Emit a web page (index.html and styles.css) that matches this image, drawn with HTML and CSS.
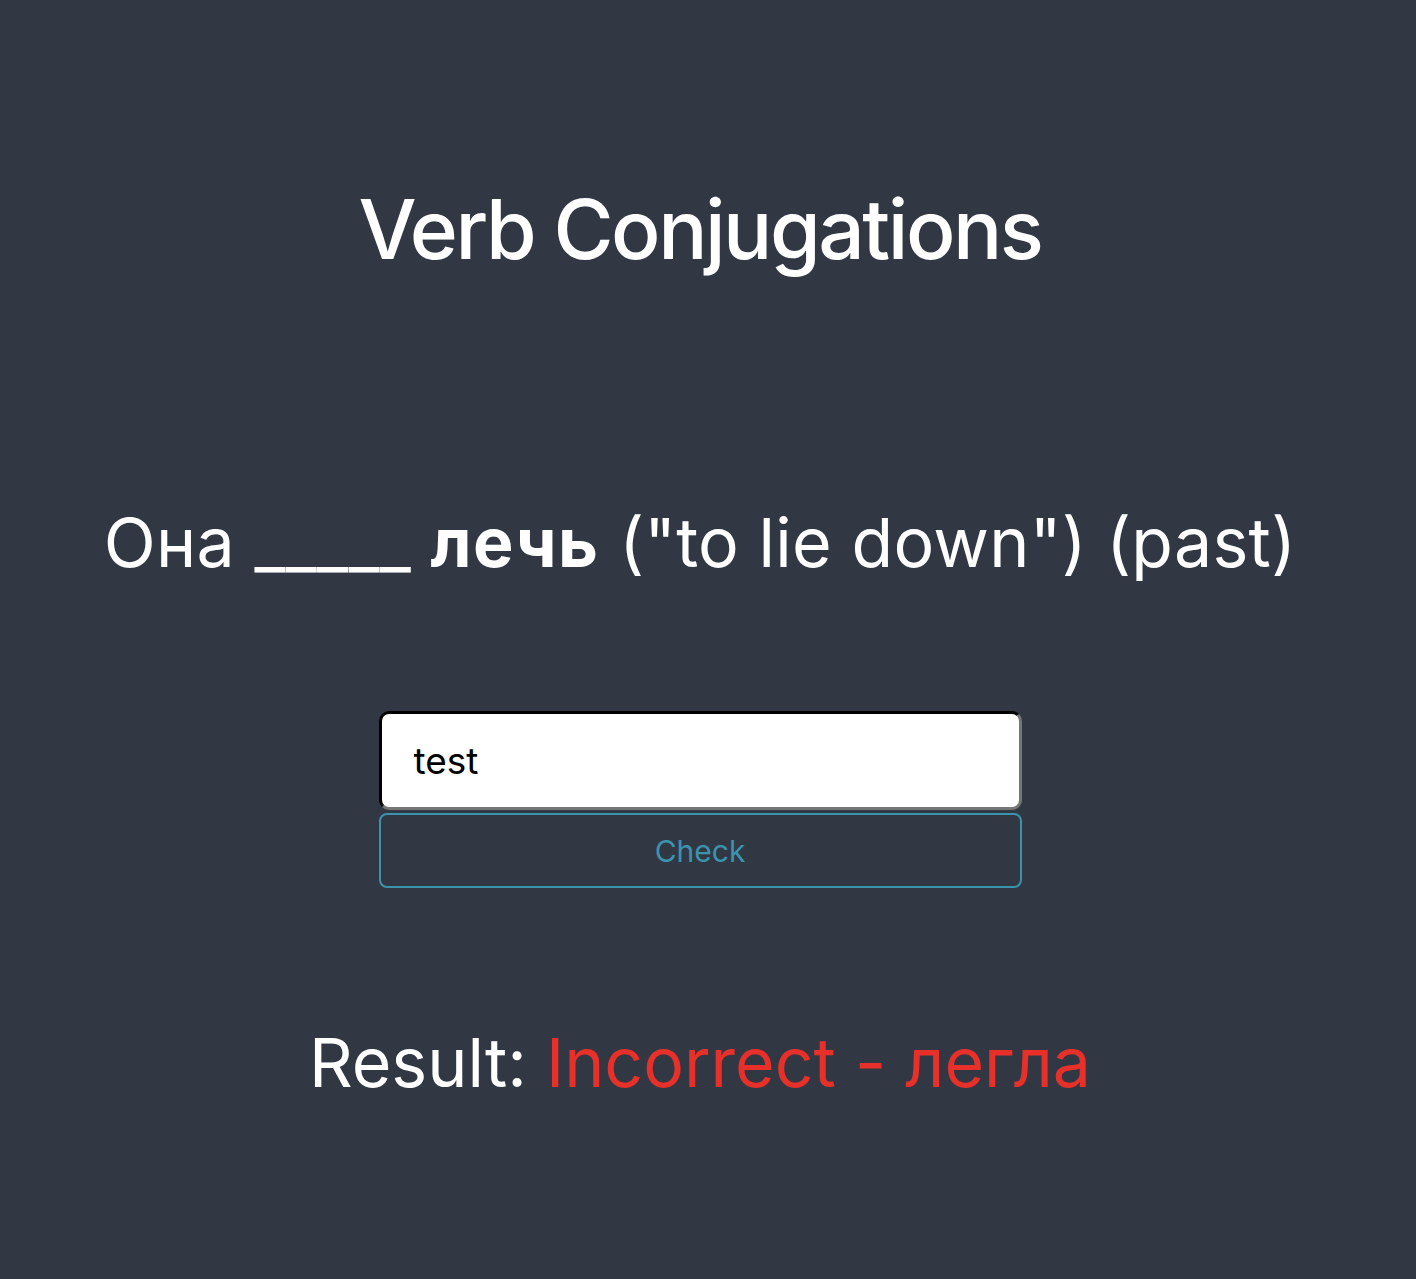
FILE: index.html
```html
<!DOCTYPE html>
<html lang="en">
<head>
<meta charset="utf-8">
<title>Verb Conjugations</title>
<link rel="stylesheet" href="styles.css">
</head>
<body>
<main class="app">
  <h1 class="title">Verb Conjugations</h1>
  <p class="prompt">Она _____ <strong>лечь</strong> ("to lie down") (past)</p>
  <form class="answer">
    <input class="answer-input" type="text" value="test">
    <button class="check-btn" type="button">Check</button>
  </form>
  <p class="result">Result: <span class="result-bad">Incorrect - легла</span></p>
</main>
</body>
</html>
```

FILE: styles.css
```css
html, body {
  margin: 0;
  padding: 0;
  background: #313843;
  min-height: 100%;
}
body {
  font-family: Inter, "Noto Sans", "Liberation Sans", sans-serif;
  color: #ffffff;
  min-height: 1279px;
}
.app {
  display: flex;
  flex-direction: column;
  align-items: center;
  padding-top: 180px;
  padding-right: 16px;
}
.title {
  margin: 0;
  font-size: 82px;
  font-weight: 500;
  line-height: 100px;
  letter-spacing: -2.5px;
}
.prompt {
  margin: 0;
  margin-top: 222px;
  font-size: 68px;
  font-weight: 400;
  line-height: 80px;
  letter-spacing: 0.3px;
}
.prompt strong {
  font-weight: 700;
  letter-spacing: 1.5px;
}
.answer {
  display: flex;
  flex-direction: column;
  width: 643px;
  margin-top: 129px;
  gap: 3px;
}
.answer-input {
  box-sizing: border-box;
  height: 99px;
  width: 100%;
  border: 3px inset #767676;
  border-top-color: #1f1f1f;
  border-left-color: #1f1f1f;
  border-radius: 10px;
  background: #ffffff;
  padding: 0 32px;
  font-family: inherit;
  font-size: 37px;
  color: #000;
}
.check-btn {
  box-sizing: border-box;
  height: 75px;
  width: 100%;
  background: transparent;
  border: 2px solid #3c93ae;
  border-radius: 8px;
  color: #3c93ae;
  font-family: inherit;
  font-size: 30px;
}
.result {
  margin: 0;
  margin-top: 134px;
  font-size: 68px;
  line-height: 80px;
}
.result-bad {
  color: #e8302a;
}
```
